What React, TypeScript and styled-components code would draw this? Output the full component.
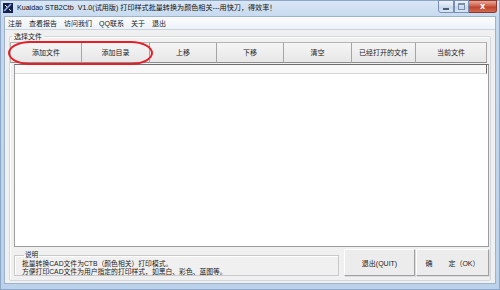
import styled, { createGlobalStyle } from "styled-components";

const GlobalStyle = createGlobalStyle`
  html, body {
    margin: 0;
    padding: 0;
    background: #ffffff;
  }
  body {
    width: 500px;
    height: 290px;
    overflow: hidden;
    font-family: "Liberation Sans", "Noto Sans CJK SC", sans-serif;
    color: #1e1e1e;
  }
`;

const Window = styled.div`
  width: 500px;
  height: 290px;
  box-sizing: border-box;
  border: 1px solid #8fa7c6;
  background: linear-gradient(#d9e6f5, #c4d8ee 18px, #bcd2ea);
  display: flex;
  flex-direction: column;
`;

const TitleBar = styled.div`
  height: 15px;
  display: flex;
  align-items: flex-start;
  padding-left: 2px;
`;

const TitleIcon = styled.svg`
  width: 10px;
  height: 10px;
  margin-top: 2px;
  flex-shrink: 0;
`;

const TitleText = styled.span`
  font-size: 7.1px;
  line-height: 9px;
  margin: 3px 0 0 4px;
  white-space: pre;
  color: #111;
  flex: 1;
`;

const Controls = styled.div`
  display: flex;
  margin-top: -1px;
  margin-right: 2px;
  height: 14px;
`;

const CtrlButton = styled.div<{ $close?: boolean; $w: number }>`
  width: ${(p) => p.$w}px;
  height: 13px;
  box-sizing: border-box;
  border: 1px solid ${(p) => (p.$close ? "#8a3b30" : "#7890b2")};
  border-left-width: ${(p) => (p.$close ? 0 : 1)}px;
  background: ${(p) =>
    p.$close
      ? "linear-gradient(#e9a899, #d0604d 45%, #c04430 55%, #d36a4d)"
      : "linear-gradient(#eef3fa, #d6e2f1 45%, #c5d6ec 55%, #d9e6f4)"};
  border-radius: ${(p) => (p.$close ? "0 0 3px 0" : p.$w === 16 ? "0 0 0 3px" : "0")};
  display: flex;
  align-items: center;
  justify-content: center;
  color: #fff;
  font-size: 8px;
  font-weight: bold;
  font-family: "DejaVu Sans", sans-serif;
`;

const MinGlyph = styled.div`
  width: 6px;
  height: 2px;
  margin-top: 4px;
  background: #4b5d78;
`;

const MaxGlyph = styled.div`
  width: 5px;
  height: 4px;
  border: 1px solid #7a8ca6;
  border-top-width: 2px;
`;

const Client = styled.div`
  flex: 1;
  margin: 0 3px 5px 3px;
  border: 1px solid #9eb2cc;
  background: #f0f0f0;
  display: flex;
  flex-direction: column;
`;

const MenuBar = styled.div`
  height: 12px;
  display: flex;
  align-items: center;
  gap: 7px;
  padding-left: 3px;
  background: linear-gradient(#fbfcfe, #edf2f9);
  border-bottom: 1px solid #c9d3df;
`;

const MenuItem = styled.span`
  font-size: 7px;
  line-height: 9px;
  color: #1a1a1a;
`;

const Group = styled.fieldset`
  position: relative;
  margin: 1.5px 4px 2px 4px;
  padding: 1px 0 4px 0;
  border: 1px solid #d0d7df;
  border-radius: 2px;
  box-shadow: inset 1px 1px 0 #ffffff;
  flex: 1;
  min-height: 0;
  display: flex;
  flex-direction: column;
`;

const Legend = styled.legend`
  font-size: 7px;
  line-height: 9px;
  padding: 0 2px;
  margin-left: 2px;
  color: #1a1a1a;
`;

const ButtonRow = styled.div`
  position: relative;
  display: grid;
  grid-template-columns: 72px 68px 67px 67px 68px 64px 71px;
  height: 21px;
  margin-right: 2px;
`;

const ToolButton = styled.div`
  display: flex;
  align-items: center;
  justify-content: center;
  font-size: 7px;
  color: #222;
  background: linear-gradient(#f5f5f5, #e7e7e7);
  border-top: 1px solid #b4b4b4;
  border-right: 1px solid #a5a5a5;
  border-bottom: 1px solid #8d8d8d;
  &:first-child {
    border-left: 1px solid #b4b4b4;
  }
  &:last-child {
    border-right-color: #6a6a6a;
  }
`;

const Annotation = styled.div`
  position: absolute;
  left: -2px;
  top: -1px;
  width: 145px;
  height: 24px;
  box-sizing: border-box;
  border: 2px solid #e61e28;
  border-radius: 22px / 12px;
  pointer-events: none;
`;

const ListBox = styled.div`
  flex: 1;
  margin: 1px 1px 0 4px;
  background: #ffffff;
  border: 1px solid #9c9c9c;
  border-top-color: #6f6f6f;
  display: flex;
  flex-direction: column;
`;

const ListHeader = styled.div`
  height: 8px;
  background: #f8f8f8;
  border-bottom: 1px solid #d4d4d4;
  border-right: 1px solid #6a6a6a;
  margin-right: 1px;
`;

const BottomRow = styled.div`
  display: flex;
  height: 27px;
  margin: 2px 1px 0 4px;
`;

const NoteBox = styled.fieldset`
  flex: 1;
  margin: 2px 5px 0 0;
  padding: 1px 0 1px 7px;
  border: 1px solid #c9c9c9;
  box-shadow: inset 1px 1px 0 #ffffff;
  display: flex;
  flex-direction: column;
  justify-content: flex-start;
`;

const NoteLegend = styled.legend`
  font-size: 6.6px;
  line-height: 8px;
  padding: 0 1px;
  margin-left: 2px;
  color: #1a1a1a;
`;

const NoteLine = styled.div`
  font-size: 6.8px;
  line-height: 8px;
  white-space: nowrap;
  color: #1a1a1a;
`;

const ActionButton = styled.div<{ $w: number }>`
  width: ${(p) => p.$w}px;
  box-sizing: border-box;
  display: flex;
  align-items: center;
  justify-content: center;
  font-size: 7px;
  white-space: pre;
  color: #222;
  background: #ececec;
  border-top: 1px solid #ffffff;
  border-left: 1px solid #ffffff;
  border-right: 1px solid #a0a0a0;
  border-bottom: 1px solid #a0a0a0;
  box-shadow: 1px 1px 0 #dcdcdc;
  & + & {
    margin-left: 1px;
  }
`;

const toolButtons = ["添加文件", "添加目录", "上移", "下移", "清空", "已经打开的文件", "当前文件"];
const menuItems = ["注册", "查看报告", "访问我们", "QQ联系", "关于", "退出"];

export default function App() {
  return (
    <>
      <GlobalStyle />
      <Window>
        <TitleBar>
          <TitleIcon viewBox="0 0 10 10">
            <rect x="0" y="0" width="10" height="10" fill="#15204f" />
            <path d="M1 8 L8 1" stroke="#8fb4e8" strokeWidth="1.6" />
            <path d="M2 2 L4 4 M6 6 L8 8" stroke="#ffffff" strokeWidth="1" />
          </TitleIcon>
          <TitleText>Kuaidao STB2Ctb  V1.0(试用版) 打印样式批量转换为颜色相关---用快刀，得效率！</TitleText>
          <Controls>
            <CtrlButton $w={16}>
              <MinGlyph />
            </CtrlButton>
            <CtrlButton $w={15}>
              <MaxGlyph />
            </CtrlButton>
            <CtrlButton $w={28} $close>
              x
            </CtrlButton>
          </Controls>
        </TitleBar>
        <Client>
          <MenuBar>
            {menuItems.map((m) => (
              <MenuItem key={m}>{m}</MenuItem>
            ))}
          </MenuBar>
          <Group>
            <Legend>选择文件</Legend>
            <ButtonRow>
              {toolButtons.map((b) => (
                <ToolButton key={b}>{b}</ToolButton>
              ))}
              <Annotation />
            </ButtonRow>
            <ListBox>
              <ListHeader />
            </ListBox>
            <BottomRow>
              <NoteBox>
                <NoteLegend>说明</NoteLegend>
                <NoteLine>批量转换CAD文件为CTB（颜色相关）打印模式。</NoteLine>
                <NoteLine>方便打印CAD文件为用户指定的打印样式，如黑白、彩色、蓝图等。</NoteLine>
              </NoteBox>
              <ActionButton $w={71}>退出(QUIT)</ActionButton>
              <ActionButton $w={73}>{"确　　 定（OK）"}</ActionButton>
            </BottomRow>
          </Group>
        </Client>
      </Window>
    </>
  );
}
